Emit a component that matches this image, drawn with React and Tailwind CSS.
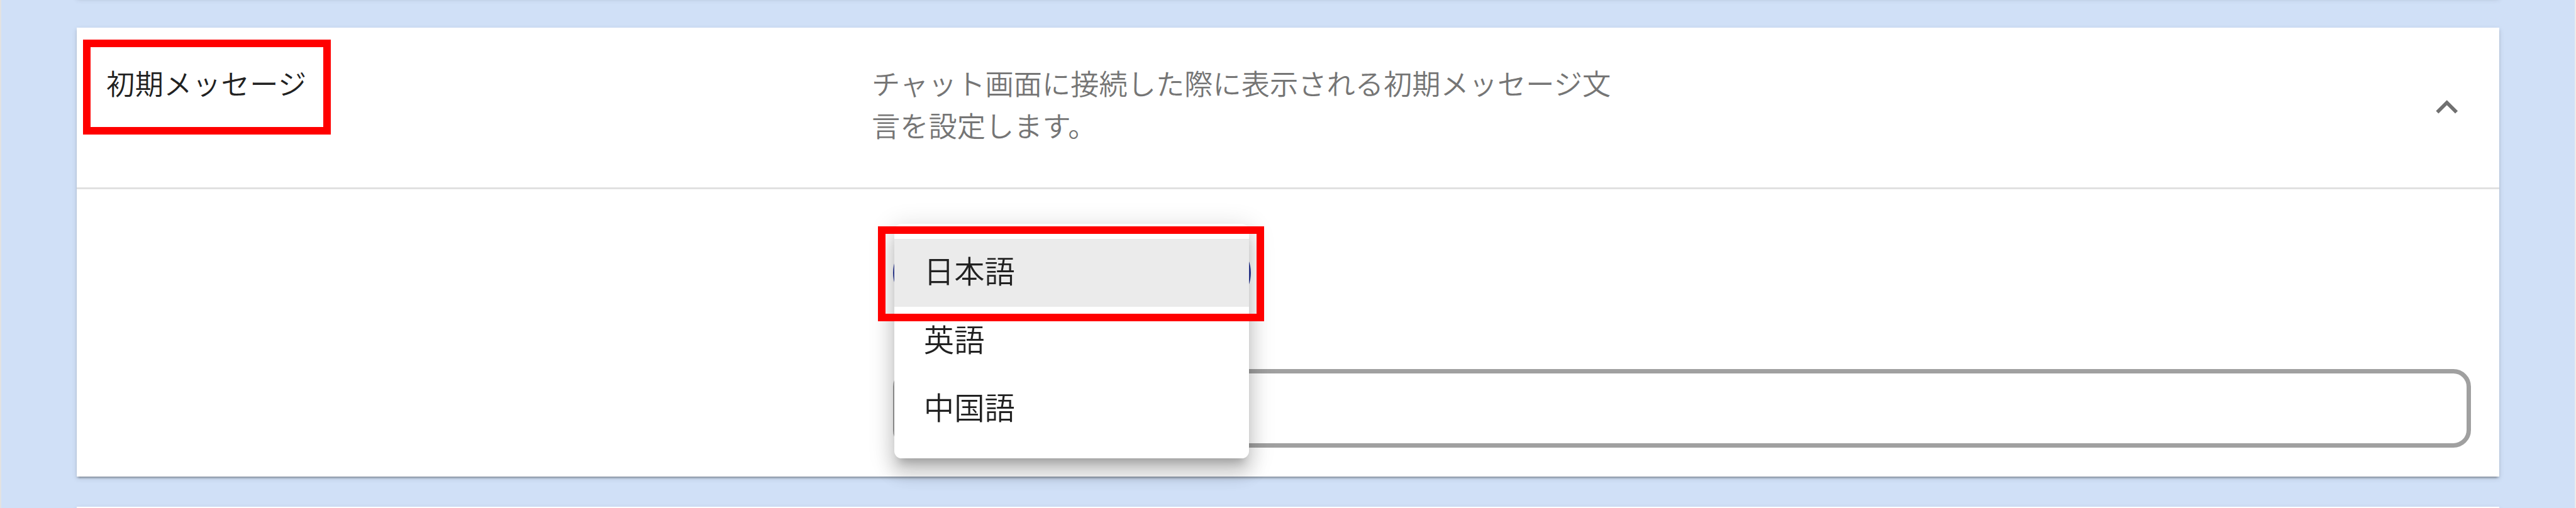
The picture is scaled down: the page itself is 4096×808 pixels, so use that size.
import { useState } from "react";

const LANGUAGES = [
  { key: "ja", label: "日本語" },
  { key: "en", label: "英語" },
  { key: "zh", label: "中国語" },
];

const CARD =
  "ml-[120px] w-[3852px] shrink-0 bg-white shadow-[0_5.7px_2.8px_-2.8px_rgba(0,0,0,0.2),0_2.8px_2.8px_0_rgba(0,0,0,0.14),0_2.8px_8.5px_0_rgba(0,0,0,0.12)]";

function ChevronUp() {
  return (
    <svg viewBox="0 0 24 24" className="w-[69.4px] h-[69.4px] fill-[#707070]">
      <path d="M12 8l-6 6 1.41 1.41L12 10.83l4.59 4.58L18 14z" />
    </svg>
  );
}

function LanguageMenu({ value, onSelect }) {
  return (
    <ul className="absolute left-[2.2px] top-[-24.3px] w-[564.5px] h-[373.2px] pt-[24.3px] rounded-[11.5px] bg-white shadow-[0_14px_14px_-8.5px_rgba(0,0,0,0.2),0_22.7px_28.4px_2.8px_rgba(0,0,0,0.14),0_8.5px_39.8px_5.7px_rgba(0,0,0,0.12)]">
      {LANGUAGES.map(l => (
        <li
          key={l.key}
          onClick={() => onSelect(l.key)}
          className={`flex items-center h-[108.4px] pb-[9px] pl-[47px] text-[48.4px] leading-none text-[#212121] ${
            value === l.key ? "bg-[#ebebeb]" : ""
          }`}
        >
          {l.label}
        </li>
      ))}
    </ul>
  );
}

export default function App() {
  const [lang, setLang] = useState("ja");

  return (
    <div className="flex flex-col gap-[48px] w-[4096px] h-[808px] overflow-hidden bg-[#d0e0f7] border-l-2 border-r-2 border-l-[#e2e2e2] border-r-[#ececec] font-['Noto_Sans_CJK_JP',sans-serif] font-[350]">
      {/* Previous section, scrolled out above */}
      <section className={`${CARD} h-[40px] mt-[-44px]`} />

      <section className={`${CARD} h-[714px]`}>
        <header className="flex h-[257.4px] pt-[53.8px] pl-[47px] pr-[49px] border-b-[3px] border-[#e0e0e0] text-[45.25px] leading-[67.6px]">
          <div className="relative w-[1217px] text-[#212121]">
            <h2 className="tracking-[0.4px] font-[350]">初期メッセージ</h2>
            {/* Highlight */}
            <span className="absolute left-[-37px] top-[-34.8px] w-[394px] h-[150.5px] border-[12px] border-[#ff0000]" />
          </div>
          <p className="w-[1190px] text-[#757575]">
            チャット画面に接続した際に表示される初期メッセージ文言を設定します。
          </p>
          <button className="ml-auto mt-[38.5px] self-start">
            <ChevronUp />
          </button>
        </header>

        <div className="flex flex-col gap-[99.6px] pt-[78.6px] pl-[1297.6px]">
          <div className="relative z-10 w-[569px] h-[107.6px] border-[6px] border-[#303f9f] rounded-[54px]">
            <div className="absolute left-[-6px] top-[-6px]">
              <LanguageMenu value={lang} onSelect={setLang} />
              {/* Highlight */}
              <span className="absolute left-[-23.5px] top-[-20px] w-[614px] h-[151.2px] border-[12px] border-[#ff0000]" />
            </div>
          </div>
          <div className="w-[2509px] h-[124.4px] border-[7px] border-[#a0a0a0] rounded-[28px]" />
        </div>
      </section>

      <section className={`${CARD} h-[40px]`} />
    </div>
  );
}
